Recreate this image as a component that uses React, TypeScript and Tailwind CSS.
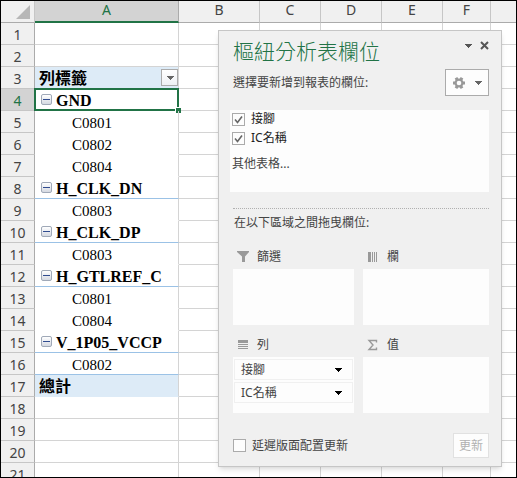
import React, { useState } from 'react';

type Row = { kind: 'empty' | 'header' | 'group' | 'item' | 'total'; text?: string; line?: boolean };

const columns = ['B', 'C', 'D', 'E', 'F', ''];

const rows: Row[] = [
  { kind: 'empty' },
  { kind: 'empty' },
  { kind: 'header', text: '列標籤' },
  { kind: 'group', text: 'GND' },
  { kind: 'item', text: 'C0801' },
  { kind: 'item', text: 'C0802' },
  { kind: 'item', text: 'C0804' },
  { kind: 'group', text: 'H_CLK_DN' },
  { kind: 'item', text: 'C0803' },
  { kind: 'group', text: 'H_CLK_DP' },
  { kind: 'item', text: 'C0803' },
  { kind: 'group', text: 'H_GTLREF_C' },
  { kind: 'item', text: 'C0801' },
  { kind: 'item', text: 'C0804' },
  { kind: 'group', text: 'V_1P05_VCCP' },
  { kind: 'item', text: 'C0802', line: true },
  { kind: 'total', text: '總計' },
  { kind: 'empty' },
  { kind: 'empty' },
  { kind: 'empty' },
  { kind: 'empty' },
];

const cellStyles = {
  empty: 'border-b-[#d4d4d4]',
  header: 'border-b-[#ddebf7] bg-[#ddebf7] pl-1 font-bold',
  group: 'border-b-[#9bc2e6] pl-1.5 font-bold',
  item: 'border-b-white pl-[37px] text-[15px]',
  total: 'border-b-[#ddebf7] bg-[#ddebf7] pl-1 font-bold',
};

const Caret = ({ className }: { className: string }) => (
  <svg viewBox="0 0 8 4" className={className} shapeRendering="crispEdges" aria-hidden="true">
    <path d="M0 0h8L4 4z" fill="currentColor" />
  </svg>
);

const FunnelIcon = () => (
  <svg viewBox="0 0 12 12" className="h-3 w-3" fill="#999" aria-hidden="true">
    <path d="M0 0h12v1L8 5.500V11H5V5.500L0 1z" />
  </svg>
);

const ColumnsIcon = () => (
  <svg viewBox="0 0 12 12" className="h-3 w-3" fill="#999" shapeRendering="crispEdges" aria-hidden="true">
    <path d="M1 1h3v10H1zM5 1h1v10H5zM7 1h1v10H7zM9 1h1v10H9z" />
  </svg>
);

const RowsIcon = () => (
  <svg viewBox="0 0 12 12" className="h-3 w-3" fill="#999" shapeRendering="crispEdges" aria-hidden="true">
    <path d="M1 1h10v3H1zM1 5h10v1H1zM1 7h10v1H1zM1 9h10v1H1z" />
  </svg>
);

const SigmaIcon = () => (
  <svg viewBox="0 0 12 12" className="h-3 w-3" fill="none" stroke="#999" strokeWidth="1.4" aria-hidden="true">
    <path d="M9.500 3.500V1.500H2L6 6l-4 4.500h7.500v-2" />
  </svg>
);

const GearIcon = () => (
  <svg viewBox="0 0 14 14" className="h-3.5 w-3.5" aria-hidden="true">
    <g fill="#999">
      <rect x="5.500" y="1" width="3" height="12" transform="rotate(30 7 7)" />
      <rect x="5.500" y="1" width="3" height="12" transform="rotate(90 7 7)" />
      <rect x="5.500" y="1" width="3" height="12" transform="rotate(150 7 7)" />
      <circle cx="7" cy="7" r="4.500" />
    </g>
    <circle cx="7" cy="7" r="2.300" fill="#fdfdfd" />
  </svg>
);

const CheckBox = ({ id, label, defaultChecked = false }: { id: string; label: string; defaultChecked?: boolean }) => {
  const [checked, setChecked] = useState(defaultChecked);

  return (
    <div className="flex items-center gap-1.5">
      <span className="grid h-[13px] w-[13px]">
        <input
          id={id}
          type="checkbox"
          checked={checked}
          onChange={() => setChecked(!checked)}
          className="col-start-1 row-start-1 h-[13px] w-[13px] appearance-none border border-[#ababab] bg-[#fdfdfd]"
        />
        {checked && (
          <svg viewBox="0 0 13 13" className="pointer-events-none col-start-1 row-start-1" fill="none" stroke="#666" strokeWidth="1.6" aria-hidden="true">
            <path d="M3 6.500l2.500 3L10 3.500" />
          </svg>
        )}
      </span>
      <label htmlFor={id}>{label}</label>
    </div>
  );
};

const Area = ({ icon, title, fields = [] }: { icon: React.ReactNode; title: string; fields?: string[] }) => (
  <section>
    <h3 className="flex h-6 items-center gap-2 pl-1">
      {icon}
      {title}
    </h3>
    <div className="h-14 space-y-0.5 bg-[#fdfdfd] p-px pt-0.5">
      {fields.map((field) => (
        <button key={field} className="flex h-[21px] w-full items-center justify-between border border-[#f0f0f0] pr-2.5 pl-1.5 text-left">
          {field}
          <Caret className="h-1 w-2 text-black" />
        </button>
      ))}
    </div>
  </section>
);

const Sheet = () => (
  <table className="w-full table-fixed border-separate border-spacing-0">
    <colgroup>
      <col className="w-[34px]" />
      <col className="w-[144px]" />
      <col className="w-[81px]" />
      <col className="w-[61px]" />
      <col className="w-[61px]" />
      <col className="w-[61px]" />
      <col className="w-12" />
      <col />
    </colgroup>
    <thead className="bg-[#f0f0f0] text-sm leading-4 text-[#444]">
      <tr className="h-[22px]">
        <th className="border-r border-b border-r-[#c6c6c6] border-b-[#ababab] p-0">
          <svg viewBox="0 0 14 14" className="mr-1 ml-auto h-3.5 w-3.5" aria-hidden="true">
            <path d="M14 0v14H0z" fill="#b7b7b7" />
          </svg>
        </th>
        <th className="border-r border-b-2 border-r-[#ababab] border-b-[#217346] bg-[#d3d3d3] p-0 pb-0.5 font-normal text-[#217346]">A</th>
        {columns.map((name) => (
          <th key={name} className="border-r border-b border-r-[#c6c6c6] border-b-[#ababab] p-0 pb-1 font-normal last:border-r-0">
            {name}
          </th>
        ))}
      </tr>
    </thead>
    <tbody>
      {rows.map((row, i) => (
        <tr key={i} className="h-[22px]">
          <th
            className={`border-r border-b border-r-[#ababab] border-b-[#c6c6c6] p-0 pt-0.5 text-sm leading-4 font-normal ${
              i === 3 ? 'bg-[#d3d3d3] text-[#217346]' : 'bg-[#f0f0f0] text-[#444]'
            }`}
          >
            {i + 1}
          </th>
          <td
            className={`relative border-r border-b border-r-[#d4d4d4] p-0 font-['Liberation_Serif','Noto_Sans_CJK_TC',serif] text-base leading-4 text-black ${
              row.line ? 'border-b-[#9bc2e6] pl-[37px] text-[15px]' : cellStyles[row.kind]
            }`}
          >
            <div className="flex h-[21px] items-center gap-1">
              {row.kind === 'group' && (
                <button aria-label={`摺疊 ${row.text}`} className="flex h-[11px] w-[11px] items-center justify-center rounded-xs border border-[#a0a9b8] bg-gradient-to-b from-white to-[#d5d9e2]">
                  <span className="h-px w-[7px] bg-[#2f4b8f]" />
                </button>
              )}
              <span className="pt-0.5">{row.text}</span>
              {row.kind === 'header' && (
                <button aria-label="篩選列標籤" className="ml-auto flex h-[17px] w-[17px] items-center justify-center border border-[#ababab] bg-gradient-to-b from-white to-[#eef0f4]">
                  <Caret className="h-1 w-2 text-[#666]" />
                </button>
              )}
            </div>
            {/* selected cell */}
            {i === 3 && (
              <span className="pointer-events-none absolute -inset-px border-2 border-[#217346]">
                <span className="absolute -right-1 -bottom-1 h-1.5 w-1.5 border-t border-l border-white bg-[#217346]" />
              </span>
            )}
          </td>
          {columns.map((name) => (
            <td key={name} className="border-r border-b border-[#d4d4d4] p-0 last:border-r-0" />
          ))}
        </tr>
      ))}
    </tbody>
  </table>
);

const FieldPanel = () => (
  <aside className="absolute top-[29px] right-3.5 w-[284px] border border-[#c6c6c6] bg-[#f0f0f0] pt-1.5 pr-3 pb-2 pl-3.5 text-xs leading-4 text-[#444] shadow-md">
    <header className="flex items-start justify-between">
      <h2 className="text-[21px] leading-7 font-light text-[#217346]">樞紐分析表欄位</h2>
      <div className="flex items-center gap-2 pt-1 text-[#555]">
        <button aria-label="工作窗格選項">
          <Caret className="h-1 w-2" />
        </button>
        <button aria-label="關閉">
          <svg viewBox="0 0 9 9" className="h-[9px] w-[9px]" fill="none" stroke="currentColor" strokeWidth="2" aria-hidden="true">
            <path d="M1 1l7 7M8 1L1 8" />
          </svg>
        </button>
      </div>
    </header>

    <div className="mt-1 flex items-center justify-between">
      <p>選擇要新增到報表的欄位:</p>
      <button aria-label="工具" className="flex h-[27px] w-11 items-center justify-center gap-2 border border-[#ababab] bg-[#fdfdfd] text-[#666]">
        <GearIcon />
        <Caret className="h-1 w-2" />
      </button>
    </div>

    <div className="mt-3.5 -ml-[3px] h-[82px] bg-[#fdfdfd] pt-px pl-0.5">
      <div className="space-y-[3px] text-[#222]">
        <CheckBox id="field-pin" label="接腳" defaultChecked />
        <CheckBox id="field-ic" label="IC名稱" defaultChecked />
      </div>
      <a href="#tables" className="mt-2.5 block">其他表格...</a>
    </div>

    <p className="mt-4 border-t border-dotted border-[#b0b0b0] pt-1.5 pl-px">在以下區域之間拖曳欄位:</p>

    <div className="mt-3.5 grid grid-cols-[121px_1fr] gap-x-[9px] gap-y-2">
      <Area icon={<FunnelIcon />} title="篩選" />
      <Area icon={<ColumnsIcon />} title="欄" />
      <Area icon={<RowsIcon />} title="列" fields={['接腳', 'IC名稱']} />
      <Area icon={<SigmaIcon />} title="值" />
    </div>

    <footer className="mt-5 flex items-center justify-between">
      <CheckBox id="defer" label="延遲版面配置更新" />
      <button disabled className="h-[25px] w-9 border border-[#e1e1e1] bg-[#fdfdfd] text-[#b1b1b1]">更新</button>
    </footer>
  </aside>
);

const App = () => (
  <main className="relative h-screen overflow-hidden border border-black bg-white font-['Noto_Sans','Noto_Sans_CJK_TC',sans-serif]">
    <Sheet />
    <FieldPanel />
  </main>
);

export default App;
